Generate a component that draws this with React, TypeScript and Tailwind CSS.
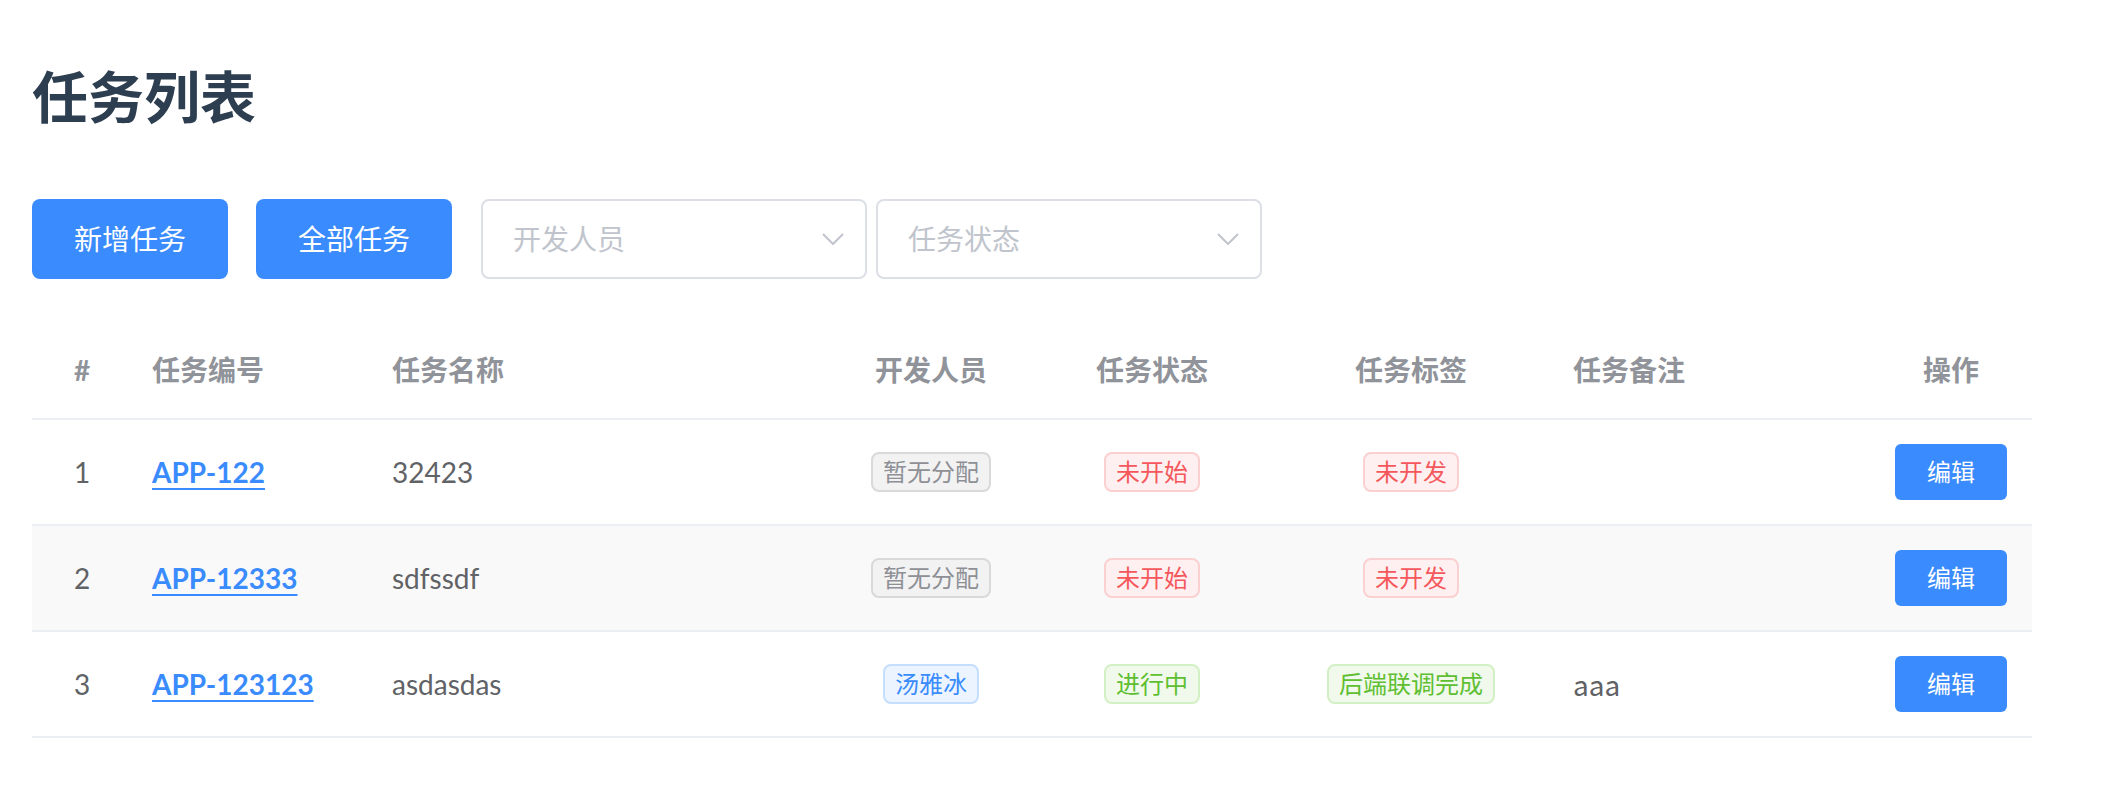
import React from 'react';

type TagType = 'info' | 'danger' | 'success' | 'primary';

interface Task {
  id: number;
  code: string;
  name: string;
  dev: { text: string; type: TagType };
  status: { text: string; type: TagType };
  tag: { text: string; type: TagType };
  remark: string;
}

const tasks: Task[] = [
  {
    id: 1,
    code: 'APP-122',
    name: '32423',
    dev: { text: '暂无分配', type: 'info' },
    status: { text: '未开始', type: 'danger' },
    tag: { text: '未开发', type: 'danger' },
    remark: '',
  },
  {
    id: 2,
    code: 'APP-12333',
    name: 'sdfssdf',
    dev: { text: '暂无分配', type: 'info' },
    status: { text: '未开始', type: 'danger' },
    tag: { text: '未开发', type: 'danger' },
    remark: '',
  },
  {
    id: 3,
    code: 'APP-123123',
    name: 'asdasdas',
    dev: { text: '汤雅冰', type: 'primary' },
    status: { text: '进行中', type: 'success' },
    tag: { text: '后端联调完成', type: 'success' },
    remark: 'aaa',
  },
];

const tagStyles: Record<TagType, string> = {
  info: 'bg-[#f2f2f3] border-[#d9d9dc] text-[#8e9095]',
  danger: 'bg-[#fef0f0] border-[#fbd0d0] text-[#f5585c]',
  success: 'bg-[#f0f9eb] border-[#d3efc4] text-[#5fbf32]',
  primary: 'bg-[#ecf5ff] border-[#c4defe] text-[#3a8bfd]',
};

const Tag = ({ text, type }: { text: string; type: TagType }) => (
  <span
    className={`inline-flex items-center h-[40px] px-[10px] border-2 rounded-[8px] text-[24px] leading-none ${tagStyles[type]}`}
  >
    {text}
  </span>
);

const Chevron = () => (
  <svg width="22" height="12" viewBox="0 0 22 12" fill="none">
    <polyline points="1,1 11,11 21,1" stroke="#c0c4cc" strokeWidth="2" />
  </svg>
);

const Select = ({ placeholder }: { placeholder: string }) => (
  <div className="w-[386px] h-[80px] border-2 border-[#dcdfe6] rounded-[8px] bg-white flex items-center justify-between pl-[30px] pr-[21px]">
    <span className="text-[28px] text-[#c0c4cc]">{placeholder}</span>
    <Chevron />
  </div>
);

const cols = 'grid grid-cols-[100px_240px_455px_208px_234px_284px_317px_162px]';

export default function App() {
  return (
    <div
      className="min-h-screen bg-white pl-[32px] pt-[57px]"
      style={{ fontFamily: 'Lato, "Noto Sans CJK SC", sans-serif' }}
    >
      <h1 className="text-[56px] leading-[80px] font-bold text-[#2c3e50]">任务列表</h1>

      <div className="mt-[62px] flex items-center">
        <button className="w-[196px] h-[80px] rounded-[8px] bg-[#3a8bfd] text-white text-[28px]">新增任务</button>
        <button className="ml-[28px] w-[196px] h-[80px] rounded-[8px] bg-[#3a8bfd] text-white text-[28px]">全部任务</button>
        <div className="ml-[29px] flex gap-[9px]">
          <Select placeholder="开发人员" />
          <Select placeholder="任务状态" />
        </div>
      </div>

      <div className="mt-[43px] w-[2000px] text-[28px]">
        <div className={`${cols} h-[98px] items-center border-b-2 border-[#ebeef5] font-bold text-[#909399]`}>
          <div className="text-center">#</div>
          <div className="pl-[20px]">任务编号</div>
          <div className="pl-[20px]">任务名称</div>
          <div className="text-center">开发人员</div>
          <div className="text-center">任务状态</div>
          <div className="text-center">任务标签</div>
          <div className="pl-[20px]">任务备注</div>
          <div className="text-center">操作</div>
        </div>
        {tasks.map((t, i) => (
          <div
            key={t.id}
            className={`${cols} h-[106px] items-center border-b-2 border-[#ebeef5] text-[#606266] ${i % 2 === 1 ? 'bg-[#f9f9f9]' : 'bg-white'}`}
          >
            <div className="text-center">{t.id}</div>
            <div className="pl-[20px]">
              <a href="#" className="font-bold text-[#3a8bfd] underline underline-offset-[5px] decoration-2">{t.code}</a>
            </div>
            <div className="pl-[20px]">{t.name}</div>
            <div className="flex justify-center"><Tag {...t.dev} /></div>
            <div className="flex justify-center"><Tag {...t.status} /></div>
            <div className="flex justify-center"><Tag {...t.tag} /></div>
            <div className="pl-[20px]" style={{ fontFamily: '"Noto Sans CJK SC", sans-serif' }}>{t.remark}</div>
            <div className="flex justify-center">
              <button className="h-[56px] w-[112px] rounded-[6px] bg-[#3a8bfd] text-white text-[24px]">编辑</button>
            </div>
          </div>
        ))}
      </div>
    </div>
  );
}
